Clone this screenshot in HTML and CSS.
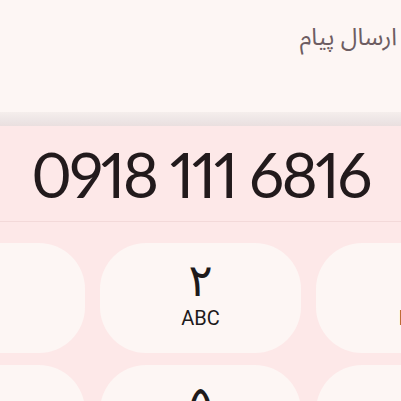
FILE: index.html
```html
<!DOCTYPE html>
<html lang="fa">
<head>
<meta charset="utf-8">
<link rel="stylesheet" href="styles.css">
</head>
<body>
<div class="screen">
  <header class="topbar">
    <span class="title">ارسال پیام</span>
  </header>
  <div class="sheet-edge"></div>
  <section class="dialer">
    <div class="number">0918 111 6816</div>
    <div class="divider"></div>
    <div class="keypad">
      <div class="key"><span class="digit">۱</span><span class="letters">&nbsp;</span></div>
      <div class="key"><span class="digit">۲</span><span class="letters">ABC</span></div>
      <div class="key"><span class="digit">۳</span><span class="letters">DEF</span></div>
      <div class="key"><span class="digit">۴</span><span class="letters">GHI</span></div>
      <div class="key"><span class="digit">۵</span><span class="letters">JKL</span></div>
      <div class="key"><span class="digit">۶</span><span class="letters">MNO</span></div>
    </div>
  </section>
</div>
</body>
</html>
```
FILE: styles.css
```css
html, body {
  margin: 0;
  padding: 0;
  background: #fdf6f4;
}
.screen {
  width: 401px;
  height: 401px;
  overflow: hidden;
  display: flex;
  flex-direction: column;
  background: #fdf6f4;
}
.topbar {
  flex: 0 0 112px;
  display: flex;
  justify-content: flex-end;
  align-items: flex-start;
  padding: 12px 4px 0 0;
  box-sizing: border-box;
}
.title {
  direction: rtl;
  font-family: "Noto Sans Arabic", "DejaVu Sans", sans-serif;
  font-size: 24px;
  color: #6d5d62;
}
.sheet-edge {
  flex: 0 0 14px;
  background: linear-gradient(#f5eeec, #ede5e5 60%, #eadfdf);
}
.dialer {
  flex: 1 0 auto;
  background: #fde8e8;
  display: flex;
  flex-direction: column;
}
.number {
  flex: 0 0 95px;
  display: flex;
  align-items: center;
  justify-content: center;
  font-family: Lato, "Liberation Sans", sans-serif;
  font-variant-numeric: proportional-nums;
  font-size: 62px;
  letter-spacing: -2.6px;
  color: #221a1c;
  white-space: nowrap;
}
.divider {
  flex: 0 0 1px;
  background: #f3d9d9;
}
.keypad {
  display: grid;
  grid-template-columns: repeat(3, 201px);
  grid-auto-rows: 110px;
  column-gap: 15px;
  row-gap: 12px;
  margin-left: -116px;
  padding-top: 21px;
}
.key {
  background: #fdf6f4;
  border-radius: 46px;
  display: flex;
  flex-direction: column;
  align-items: center;
  justify-content: center;
  padding-bottom: 9px;
  box-sizing: border-box;
  color: #1e1a1b;
}
.digit {
  font-family: "DejaVu Sans", sans-serif;
  font-size: 45px;
  line-height: 46px;
}
.letters {
  font-family: Roboto, "Liberation Sans", sans-serif;
  font-size: 20px;
  line-height: 24px;
  margin-top: 2px;
}
```
